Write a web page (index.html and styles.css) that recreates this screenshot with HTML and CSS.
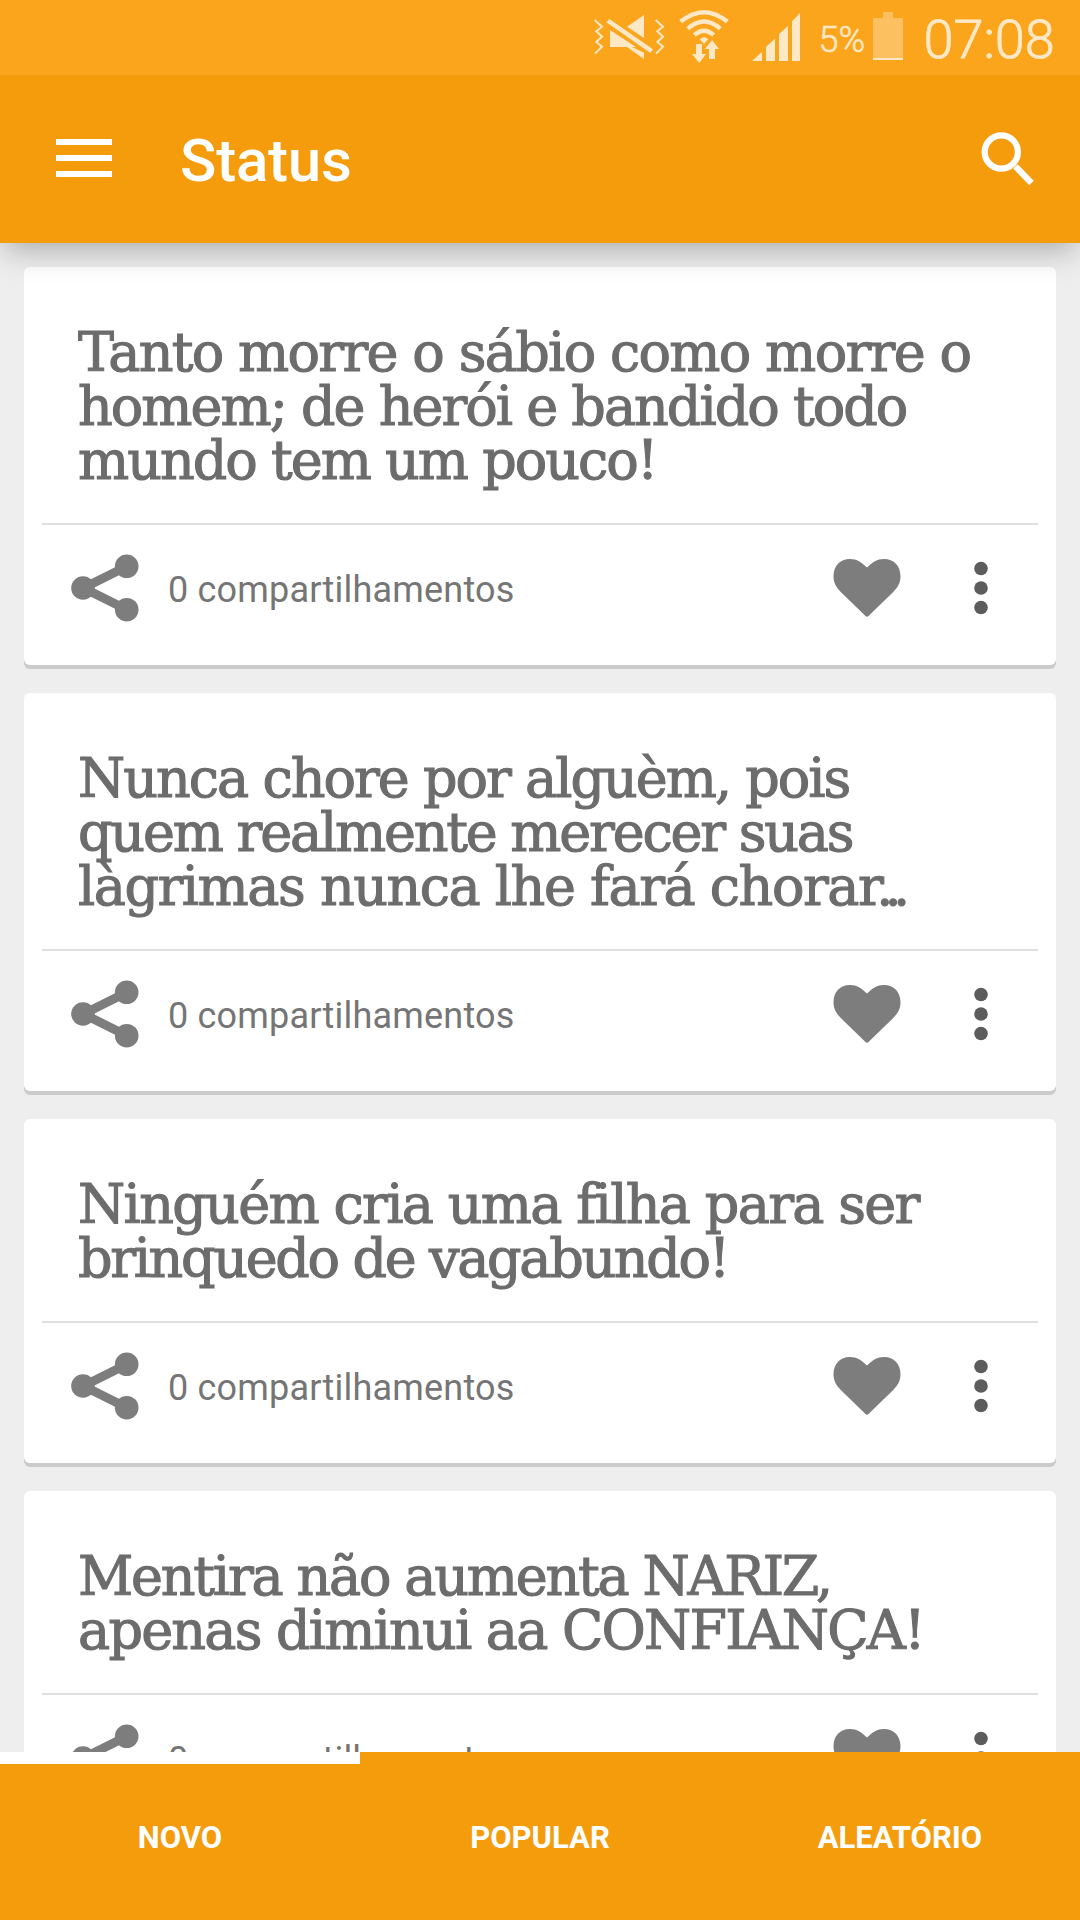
FILE: index.html
```html
<!DOCTYPE html>
<html lang="pt-BR">
<head>
<meta charset="utf-8">
<title>Status</title>
<link rel="stylesheet" href="styles.css">
</head>
<body>
<svg class="defs" aria-hidden="true">
  <symbol id="share" viewBox="0 0 68 70">
    <path d="M56 13.300 12.500 35 56 56.700" fill="none" stroke="currentColor" stroke-width="9"/>
    <circle cx="55.700" cy="13.300" r="11.800"/><circle cx="12" cy="35" r="11.800"/><circle cx="55.700" cy="56.700" r="11.800"/>
  </symbol>
  <symbol id="heart" viewBox="0 0 68 58">
    <path d="M34 8.500C28.500 3.300 24 0 17 0 7 0 .5 7 .5 17.500c0 6.500 3 11 7 15.200L32.500 57q1.500 1.500 3 0L60.500 32.700c4-4.200 7-8.700 7-15.200C67.500 7 61 0 51 0c-7 0-11.500 3.300-17 8.500z"/>
  </symbol>
  <symbol id="more" viewBox="0 0 14 54">
    <circle cx="7" cy="7.500" r="6.800"/><circle cx="7" cy="27" r="6.800"/><circle cx="7" cy="46.500" r="6.800"/>
  </symbol>
</svg>
<div class="screen">
  <div class="statusbar">
    <svg class="indicators" viewBox="0 0 660 225">
      <path class="buzz" d="M44 60 66 80 49 94 66 110 49 126 66 140 45 161M227 60 249 80 232 94 249 110 232 126 249 140 228 161" />
      <path d="M90 90 168 141H90zM141 80 192 45v69zM141 141 150 138 192 158v19zM79 67 88 57 219 148 211 159z"/>
      <g class="waves">
        <path d="M302 65Q372 8 442 65"/><path d="M323 86Q372 43 421 86"/><path d="M343 105Q372 79 401 105"/>
      </g>
      <path d="M359 118Q372 106 385 118L372 132z"/>
      <path d="M348 132h18v30h12l-20 27-22-27h12zM387 177h18v-30h12l-21-27-21 27h12z"/>
      <path d="M516 183 546 155v28zM558 183v-43l27-24v67zM597 183v-81l27-24v105zM636 183V64l24-25v144z"/>
    </svg>
    <span class="percent">5%</span>
    <svg class="battery" viewBox="0 0 30 48"><path d="M0 6h10V0h10v6h10v40H0z" opacity=".4"/><path d="M0 46h30v2H0z"/></svg>
    <span class="clock">07:08</span>
  </div>
  <header class="appbar">
    <svg class="menu" viewBox="0 0 56 38"><path d="M0 0h56v6H0zM0 16h56v6H0zM0 32h56v6H0z"/></svg>
    <h1 class="title">Status</h1>
    <svg class="search" viewBox="0 0 54 54"><circle cx="20.300" cy="20" r="16.600"/><path d="m34.500 34.500 16 16.500"/></svg>
  </header>
  <main class="feed">
    <article class="card">
      <p class="quote"><span class="line s17">Tanto morre o sábio como morre o</span><span class="line s20">homem; de herói e bandido todo</span><span class="line s20">mundo tem um pouco!</span></p>
      <div class="actions"><svg class="share"><use href="#share"/></svg><span class="count">0 compartilhamentos</span><svg class="heart"><use href="#heart"/></svg><svg class="more"><use href="#more"/></svg></div>
    </article>
    <article class="card">
      <p class="quote"><span class="line s20">Nunca chore por alguèm, pois</span><span class="line s22">quem realmente merecer suas</span><span class="line s15">làgrimas nunca lhe fará chorar<span class="dots">...</span></span></p>
      <div class="actions"><svg class="share"><use href="#share"/></svg><span class="count">0 compartilhamentos</span><svg class="heart"><use href="#heart"/></svg><svg class="more"><use href="#more"/></svg></div>
    </article>
    <article class="card">
      <p class="quote"><span class="line s17">Ninguém cria uma filha para ser</span><span class="line s23">brinquedo de vagabundo!</span></p>
      <div class="actions"><svg class="share"><use href="#share"/></svg><span class="count">0 compartilhamentos</span><svg class="heart"><use href="#heart"/></svg><svg class="more"><use href="#more"/></svg></div>
    </article>
    <article class="card">
      <p class="quote"><span class="line s22">Mentira não aumenta NARIZ,</span><span class="line s18">apenas diminui aa CONFIANÇA!</span></p>
      <div class="actions"><svg class="share"><use href="#share"/></svg><span class="count">0 compartilhamentos</span><svg class="heart"><use href="#heart"/></svg><svg class="more"><use href="#more"/></svg></div>
    </article>
  </main>
  <nav class="tabs">
    <span class="tab active">NOVO</span><span class="tab">POPULAR</span><span class="tab">ALEATÓRIO</span>
  </nav>
</div>
</body>
</html>
```
FILE: styles.css
```css
* { box-sizing: border-box; }
body { margin: 0; font-family: Roboto, sans-serif; }
svg { display: block; flex: none; fill: currentColor; }
.defs { display: none; }
.screen { width: 1080px; height: 1920px; display: flex; flex-direction: column; overflow: hidden; background: #eee; }

.statusbar { position: relative; z-index: 2; height: 75px; flex: none; display: flex; align-items: flex-start; padding-left: 580px; background: #fba51d; color: #fee8c6; white-space: nowrap; }
.indicators { width: 220px; height: 75px; }
.buzz { fill: none; stroke: currentColor; stroke-width: 6; }
.waves { fill: none; stroke: currentColor; stroke-width: 13; }
.percent { width: 54.5px; margin-left: 18.5px; padding-top: 19px; font-size: 36px; line-height: 42px; font-weight: 300; -webkit-text-stroke: .6px; }
.battery { width: 30px; height: 48px; margin-top: 12px; }
.clock { margin-left: 20.5px; padding-top: 8px; font-size: 54px; line-height: 64px; font-weight: 300; -webkit-text-stroke: .8px; }

.appbar { position: relative; z-index: 1; height: 168px; flex: none; display: flex; align-items: flex-start; padding: 0 45px 0 56px; background: #f59c0d; color: #fff; box-shadow: 0 10px 30px -4px rgba(0, 0, 0, .3); }
.menu { width: 56px; height: 38px; margin-top: 64px; }
.title { margin: 51px 0 0 68px; font-size: 60px; line-height: 70px; font-weight: 500; letter-spacing: -.2px; }
.search { width: 54px; height: 54px; margin: 57px 0 0 auto; fill: none; stroke: currentColor; stroke-width: 6.200; }

.feed { flex: 1; min-height: 0; overflow: hidden; display: flex; flex-direction: column; gap: 28px; padding: 24px 24px 0; }
.card { flex: none; padding: 59px 18px 0; border-radius: 6px; background: #fff; box-shadow: 0 4px 0 #cbcbcb; }
.quote { margin: 0; padding: 0 0 35px 36px; font-family: "DejaVu Serif", serif; font-size: 54px; line-height: 54px; color: #6c6c6c; -webkit-text-stroke: 1.1px; }
.line { display: block; white-space: nowrap; }
.s15 { letter-spacing: -1.5px; }
.s17 { letter-spacing: -1.69px; }
.s18 { letter-spacing: -1.8px; }
.s20 { letter-spacing: -2px; }
.s22 { letter-spacing: -2.22px; }
.s23 { letter-spacing: -2.35px; }
.dots { margin-left: -6px; letter-spacing: -8.8px; }
.actions { height: 142px; display: flex; align-items: center; padding: 0 50px 14px 29px; border-top: 2px solid #e0e0e0; color: #7d7d7d; }
.share { width: 68px; height: 70px; }
.count { margin-left: 29px; padding-top: 4px; font-size: 36px; letter-spacing: .2px; color: #757575; white-space: nowrap; }
.heart { width: 68px; height: 58px; margin-left: auto; }
.more { width: 14px; height: 54px; margin-left: 73px; color: #5c5c5c; }

.tabs { height: 168px; flex: none; display: grid; grid-template-columns: repeat(3, 1fr); background: #f59c0d; color: #fff; }
.tab { display: flex; align-items: center; justify-content: center; border-top: 12px solid transparent; font-size: 31px; line-height: 36px; font-weight: 700; padding-bottom: 8px; }
.active { border-top-color: #fff; }
```
